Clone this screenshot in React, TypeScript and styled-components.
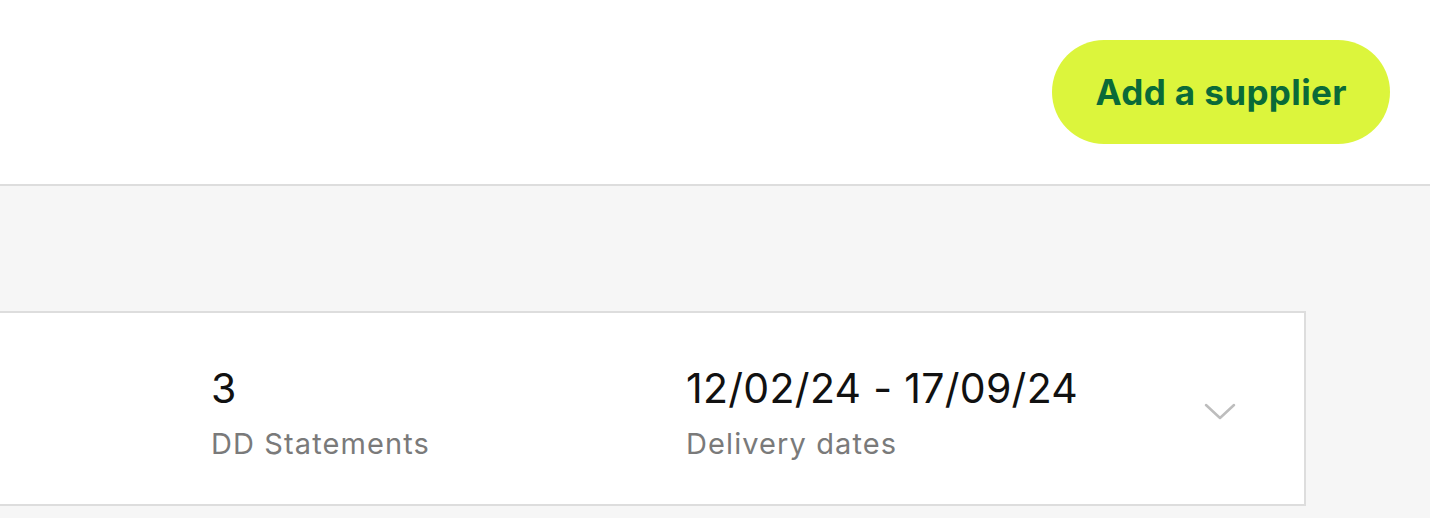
import React from 'react';
import styled, { createGlobalStyle } from 'styled-components';

const GlobalStyle = createGlobalStyle`
  html, body {
    margin: 0;
    padding: 0;
    background: #f6f6f6;
    font-family: Inter, "Noto Sans", sans-serif;
    overflow: hidden;
  }
`;

const Header = styled.header`
  height: 184px;
  background: #ffffff;
  border-bottom: 2px solid #dddddd;
  display: flex;
  align-items: center;
  justify-content: flex-end;
  padding: 0 40px;
`;

const PrimaryButton = styled.button`
  height: 104px;
  padding: 0 43px;
  border: none;
  border-radius: 52px;
  background: #dcf53c;
  color: #0a6a38;
  font-family: Inter, sans-serif;
  font-size: 35px;
  font-weight: 700;
  letter-spacing: 0.4px;
  cursor: pointer;
`;

const Content = styled.main`
  padding: 125px 124px 0 0;
`;

const StatementCard = styled.div`
  height: 195px;
  box-sizing: border-box;
  background: #ffffff;
  border: 2px solid #dddddd;
  border-left: none;
  display: grid;
  grid-template-columns: 475px 1fr 48px;
  align-items: center;
  padding: 0 60px 0 211px;
`;

const Stat = styled.div`
  display: flex;
  flex-direction: column;
  gap: 14px;
  padding-top: 8px;
`;

const StatValue = styled.span`
  font-size: 41px;
  color: #111111;
  line-height: 1.2;
  letter-spacing: 0.3px;
`;

const StatLabel = styled.span`
  font-size: 29px;
  color: #7a7a7a;
  line-height: 1.2;
  letter-spacing: 1.1px;
`;

const ExpandButton = styled.button`
  width: 48px;
  height: 48px;
  border: none;
  background: transparent;
  display: flex;
  align-items: center;
  justify-content: center;
  padding: 0;
  margin-top: 6px;
  cursor: pointer;
`;

const Chevron = () => (
  <svg width="32" height="18" viewBox="0 0 32 18" fill="none">
    <path d="M2 2 L16 15 L30 2" stroke="#bdbdbd" strokeWidth="2.5" strokeLinecap="round" strokeLinejoin="round" />
  </svg>
);

export default function App() {
  return (
    <>
      <GlobalStyle />
      <Header>
        <PrimaryButton>Add a supplier</PrimaryButton>
      </Header>
      <Content>
        <StatementCard>
          <Stat>
            <StatValue>3</StatValue>
            <StatLabel>DD Statements</StatLabel>
          </Stat>
          <Stat>
            <StatValue>12/02/24 - 17/09/24</StatValue>
            <StatLabel>Delivery dates</StatLabel>
          </Stat>
          <ExpandButton aria-label="Expand">
            <Chevron />
          </ExpandButton>
        </StatementCard>
      </Content>
    </>
  );
}
